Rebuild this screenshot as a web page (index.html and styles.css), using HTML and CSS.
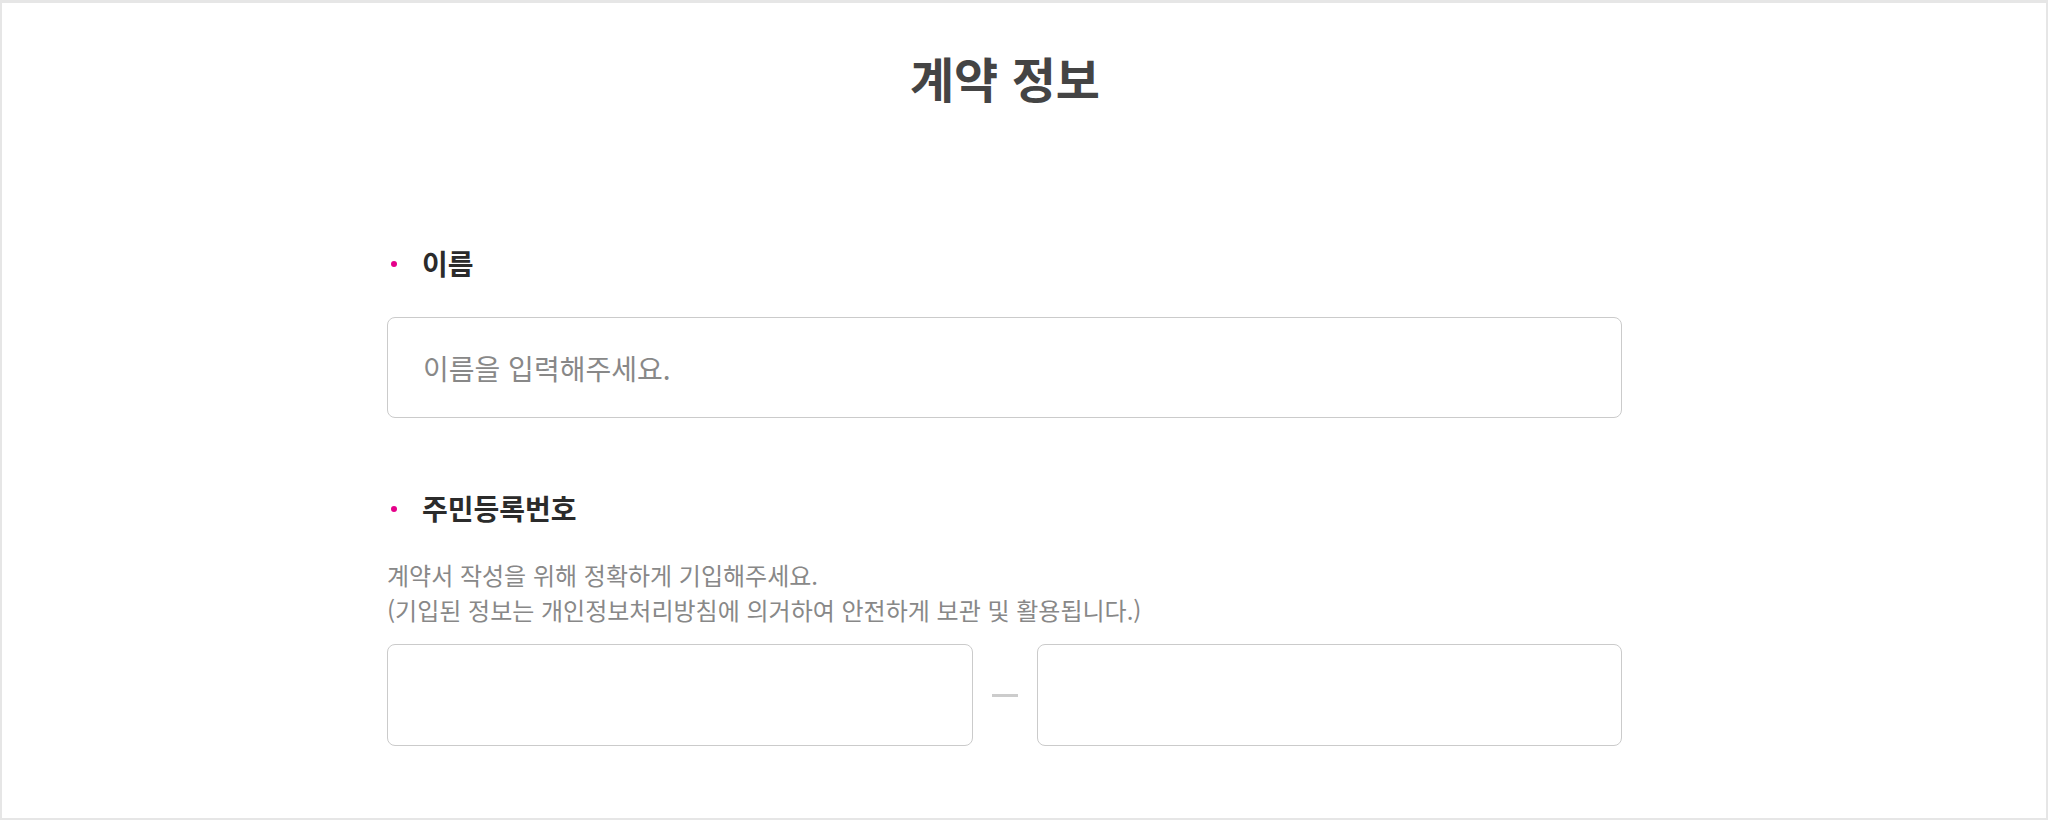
FILE: index.html
```html
<!DOCTYPE html>
<html lang="ko">
<head>
<meta charset="utf-8">
<title>계약 정보</title>
<link rel="stylesheet" href="styles.css">
</head>
<body>
<div class="page">
  <h1 class="title">계약 정보</h1>
  <form class="form">
    <div class="field field-name">
      <label class="label" for="name"><span class="dot"></span>이름</label>
      <input class="input" id="name" type="text" placeholder="이름을 입력해주세요.">
    </div>
    <div class="field field-rrn">
      <label class="label" for="rrn1"><span class="dot"></span>주민등록번호</label>
      <p class="help">계약서 작성을 위해 정확하게 기입해주세요.<br>(기입된 정보는 개인정보처리방침에 의거하여 안전하게 보관 및 활용됩니다.)</p>
      <div class="rrn-row">
        <input class="input" id="rrn1" type="text">
        <span class="dash"></span>
        <input class="input" id="rrn2" type="text">
      </div>
    </div>
  </form>
</div>
</body>
</html>
```

FILE: styles.css
```css
* { box-sizing: border-box; }
html, body { margin: 0; padding: 0; background: #fff; }
body {
  font-family: "Noto Sans CJK KR", "Noto Sans", sans-serif;
  color: #333;
}
.page {
  width: 2048px;
  height: 820px;
  border: 2px solid #e6e6e6;
  border-top-width: 3px;
  background: #fff;
  overflow: hidden;
}
.title {
  margin: 44px 0 0 0;
  padding-right: 38px;
  font-size: 48px;
  line-height: 60px;
  font-weight: 700;
  color: #444;
  text-align: center;
}
.form {
  width: 1235px;
  margin: 138px 0 0 385px;
}
.field { display: flex; flex-direction: column; }
.field-rrn { margin-top: 72px; }
.label {
  display: flex;
  align-items: center;
  font-size: 28px;
  line-height: 36px;
  font-weight: 700;
  color: #2b2b2b;
}
.dot {
  width: 6px;
  height: 6px;
  border-radius: 50%;
  background: #e5008a;
  margin: 2px 25px 0 4px;
}
.input {
  display: block;
  width: 100%;
  height: 101px;
  margin: 36px 0 0 0;
  padding: 0 35px;
  border: 1px solid #cbcbcb;
  border-radius: 8px;
  background: #fff;
  font-family: "Noto Sans CJK KR", "Noto Sans", sans-serif;
  font-size: 28px;
  color: #333;
  outline: none;
}
.input::placeholder { color: #888; }
.help {
  margin: 31px 0 0 0;
  font-size: 24px;
  line-height: 35px;
  color: #888;
}
.rrn-row {
  display: flex;
  align-items: center;
  gap: 19px;
  margin-top: 17px;
}
.rrn-row .input {
  flex: 1 1 0;
  margin: 0;
  height: 102px;
}
.dash {
  flex: 0 0 26px;
  height: 3px;
  background: #cccccc;
}
```
